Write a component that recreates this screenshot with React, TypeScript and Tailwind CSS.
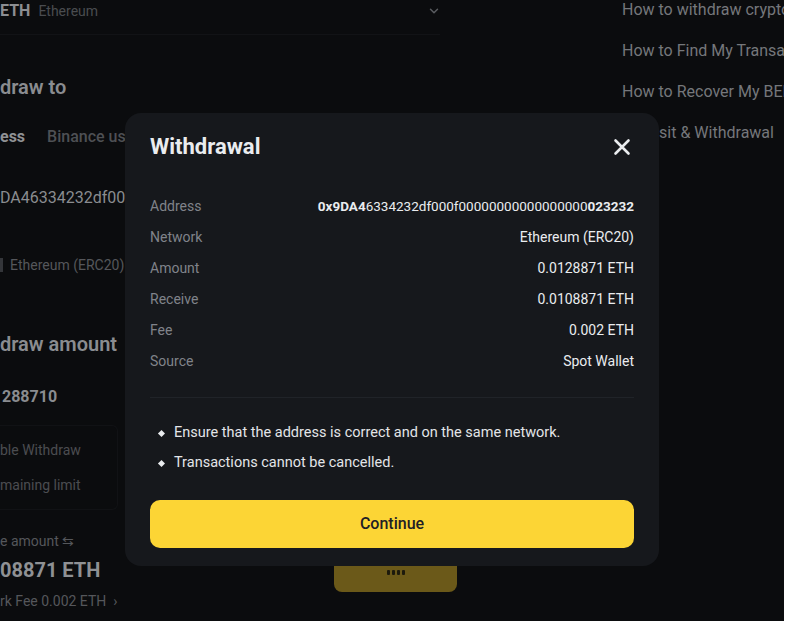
import { ChevronDown } from 'lucide-react';

const rows = [
  { label: 'Network', value: 'Ethereum (ERC20)' },
  { label: 'Amount', value: '0.0128871 ETH' },
  { label: 'Receive', value: '0.0108871 ETH' },
  { label: 'Fee', value: '0.002 ETH' },
  { label: 'Source', value: 'Spot Wallet' },
];

const faqs = [
  'How to withdraw crypto from Binance',
  'How to Find My Transaction ID (TxID)',
  'How to Recover My BEP-20 Tokens',
  'Deposit & Withdrawal',
];

const notes = [
  'Ensure that the address is correct and on the same network.',
  'Transactions cannot be cancelled.',
];

function CloseIcon() {
  return (
    <svg width="20" height="20" viewBox="0 0 20 20" fill="none">
      <path d="M3.5 3.5L16.5 16.5M16.5 3.5L3.5 16.5" stroke="#eaecef" strokeWidth="2.6" strokeLinecap="round" />
    </svg>
  );
}

function Background() {
  return (
    <>
      {/* form column, scrolled partly out of view */}
      <div className="w-[460px] shrink-0 flex flex-col">
        <div className="w-[440px] h-[22px] flex items-center justify-between">
          <div className="flex items-center gap-2">
            <span className="text-[16px] font-bold text-[#8c8e92] leading-[22px]">ETH</span>
            <span className="text-[14px] text-[#4a4c50] leading-[22px]">Ethereum</span>
          </div>
          <ChevronDown className="w-[14px] h-[14px] text-[#5a5c60] mr-[-1px]" strokeWidth={2.5} />
        </div>
        <div className="w-[440px] mt-[12px] border-b border-[#121316]" />

        <div className="mt-[38px] text-[20px] font-semibold leading-[28px] text-[#8a8c90]">draw to</div>

        <div className="mt-[24px] flex items-center gap-[22px] text-[16px] leading-[24px]">
          <span className="font-bold text-[#8f9194]">ess</span>
          <span className="font-medium text-[#4e5054] whitespace-nowrap">Binance user</span>
        </div>

        <div className="mt-[37px] w-[126px] overflow-hidden text-[16px] leading-[24px] text-[#8a8c90] whitespace-nowrap">
          DA46334232df000f0
        </div>

        <div className="mt-[45px] flex items-center gap-[7px] text-[14px] leading-[20px]">
          <span className="w-[3px] h-[14px] bg-[#34363a]" />
          <span className="text-[#55575b] whitespace-nowrap">Ethereum (ERC20)</span>
        </div>

        <div className="mt-[55px] text-[20px] font-semibold leading-[28px] text-[#8a8c90]">draw amount</div>

        <div className="mt-[27px] pl-[2px] text-[16px] font-bold leading-[24px] text-[#8a8c90]">288710</div>

        <div className="mt-[16px] w-[118px] border-y border-r border-[#111215] rounded-r-md py-[14px] flex flex-col gap-[15px] text-[14px] leading-[20px] text-[#4b4d51] whitespace-nowrap">
          <span>ble Withdraw</span>
          <span>maining limit</span>
        </div>

        <div className="mt-[21px] text-[14px] leading-[20px] text-[#55575b] whitespace-nowrap">e amount ⇆</div>
        <div className="mt-[5px] text-[20px] font-bold leading-[28px] text-[#8f9194] whitespace-nowrap">08871 ETH</div>
        <div className="mt-[7px] text-[14px] leading-[20px] text-[#55575b] whitespace-nowrap">rk Fee 0.002 ETH &nbsp;›</div>
      </div>

      {/* FAQ column */}
      <div className="flex-1 pl-[162px] flex flex-col gap-[17px] -mt-[2px] overflow-hidden">
        {faqs.map((f) => (
          <span key={f} className="text-[16px] leading-[24px] text-[#75777b] whitespace-nowrap overflow-hidden">
            {f}
          </span>
        ))}
      </div>

      {/* submit button, mostly behind the dialog */}
      <div className="absolute left-[334px] top-[530px] w-[123px] h-[62px] rounded-b-[8px] bg-[#6b5919] flex items-end justify-center pb-[17px] gap-[2px]">
        {[0, 1, 2, 3].map((i) => (
          <span key={i} className="w-[3px] h-[5px] rounded-[1px] bg-[#1d1a0c]" />
        ))}
      </div>
    </>
  );
}

function WithdrawalDialog() {
  const zeros = '0'.repeat(17);
  return (
    <div className="absolute left-[125px] top-[113px] w-[534px] h-[453px] rounded-[16px] bg-[#16181c] px-[25px] pt-[20px] pb-[18px] flex flex-col">
      <div className="h-[28px] flex items-center justify-between">
        <h2 className="text-[22px] font-bold leading-[28px] text-[#eaecef]">Withdrawal</h2>
        <button type="button" className="mr-[2px]">
          <CloseIcon />
        </button>
      </div>

      <div className="mt-[30px] flex flex-col">
        <div className="h-[31px] flex items-center justify-between">
          <span className="text-[14px] text-[#80838a]">Address</span>
          <span className="text-[13.5px] text-[#eaecef] whitespace-nowrap">
            <span className="font-bold">0x9DA4</span>
            <span>{`6334232df000f${zeros}`}</span>
            <span className="font-bold">023232</span>
          </span>
        </div>
        {rows.map((r) => (
          <div key={r.label} className="h-[31px] flex items-center justify-between">
            <span className="text-[14px] text-[#80838a]">{r.label}</span>
            <span className="text-[14px] text-[#eaecef]">{r.value}</span>
          </div>
        ))}
      </div>

      <div className="mt-[20px] border-t border-[#202328]" />

      <ul className="mt-[25px] flex flex-col gap-[10px]">
        {notes.map((n) => (
          <li key={n} className="flex items-center gap-[10px] pl-[9px] text-[14.5px] leading-[20px] text-[#e3e5e8]">
            <span className="w-[5px] h-[5px] rotate-45 bg-[#eaecef]" />
            <span>{n}</span>
          </li>
        ))}
      </ul>

      <button
        type="button"
        className="mt-[27px] h-[48px] w-full rounded-[10px] bg-[#fcd535] text-[16px] font-medium text-[#1e2026]"
      >
        Continue
      </button>
    </div>
  );
}

export default function App() {
  return (
    <div className="w-[790px] h-[631px] bg-white" style={{ fontFamily: 'Roboto, "Noto Sans", sans-serif' }}>
      <div className="relative w-[784px] h-[621px] bg-[#0b0c0e] overflow-hidden flex">
        <Background />
        <WithdrawalDialog />
      </div>
    </div>
  );
}
